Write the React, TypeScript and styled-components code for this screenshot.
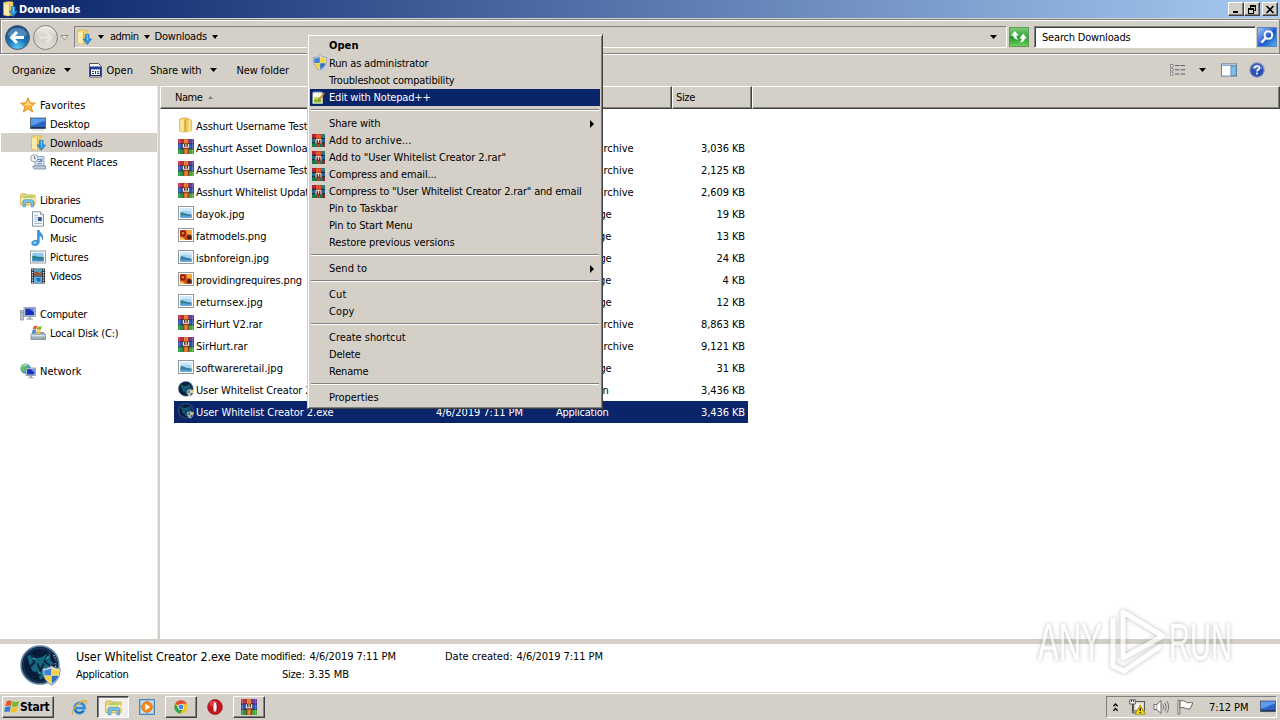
import React, { useLayoutEffect, useRef } from "react";
import styled, { createGlobalStyle, css } from "styled-components";

const FACE = "#d4d0c8";
const NAVY = "#0a246a";

const GlobalStyle = createGlobalStyle`
  * { box-sizing: border-box; }
  html, body { margin: 0; padding: 0; overflow: hidden; }
  body {
    font-family: "DejaVu Sans Condensed", "DejaVu Sans", sans-serif;
    font-size: 11px;
    line-height: 13px;
    color: #000;
    cursor: default;
  }
  svg { display: block; flex: none; }
`;

const raised = css`
  border: 1px solid;
  border-color: #fff #404040 #404040 #fff;
  box-shadow: inset -1px -1px 0 #808080;
`;

const sunken = css`
  border: 1px solid;
  border-color: #808080 #fff #fff #808080;
`;

// Label: text tracked so that it fills exactly the width it was designed for

const LabelText = styled.span<{ $bold?: boolean; $size?: number }>`
  display: inline-block;
  flex: none;
  justify-self: start;
  white-space: pre;
  ${({ $bold }) => $bold && css`font-weight: 700;`}
  ${({ $size }) => $size && css`font-size: ${$size}px;`}
`;

type LabelProps = { text: string; w?: number; bold?: boolean; size?: number };

const Label: React.FC<LabelProps> = ({ text, w, bold, size }) => {
  const ref = useRef<HTMLSpanElement>(null);
  useLayoutEffect(() => {
    const el = ref.current;
    if (!el || !w) return;
    el.style.letterSpacing = "0px";
    const natural = el.getBoundingClientRect().width;
    el.style.letterSpacing = `${(w + 0.5 - natural) / text.length}px`;
  }, [text, w]);
  return <LabelText ref={ref} $bold={bold} $size={size}>{text}</LabelText>;
};

/* ---------- icons ---------- */

type IconProps = { size?: number };

const FolderIcon: React.FC<IconProps> = ({ size = 16 }) => (
  <svg width={size} height={size} viewBox="0 0 16 16">
    <path d="M1.5 2 L6 .8 L11 1.4 V14 L6 15.2 L1.5 14 Z" fill="#f0d074" stroke="#d2a23e" strokeWidth=".6" />
    <path d="M2 3.2 L6.2 2.2 V14.6 L2 13.8 Z" fill="#fae392" />
    <path d="M6.2 2.2 L8 3 V14 L6.2 14.6 Z" fill="#d8aa40" />
    <path d="M8 2 L13.6 3 V13.6 L8 15 Z" fill="#f2d270" stroke="#d2a23e" strokeWidth=".5" />
    <path d="M11.6 3.4 V13.6" stroke="#fdf0b8" strokeWidth="1" />
  </svg>
);

const DownloadsIcon: React.FC<IconProps> = ({ size = 16 }) => (
  <svg width={size} height={size} viewBox="0 0 16 16">
    <path d="M1.5 1.5 L6.5 .5 L11 1 V14 L6 15 L1.5 14 Z" fill="#f0d074" stroke="#d9ae4d" strokeWidth=".6" />
    <path d="M2 3.2 L7 2.2 V14.8 L2 14 Z" fill="#fbe9a8" />
    <path d="M7 2.2 L8.4 3 V14 L7 14.8 Z" fill="#dfb650" />
    <path d="M9.6 5.5 H13 V10 H15.5 L11.3 15.4 L7.2 10 H9.6 Z" fill="#2f9be4" stroke="#1668ad" strokeWidth=".7" />
    <path d="M10.3 6.2 H11.6 V11" stroke="#8fd4fa" strokeWidth=".8" fill="none" />
  </svg>
);

const StarIcon = () => (
  <svg width="16" height="16" viewBox="0 0 16 16">
    <path d="M8 .8 L10 5.8 L15.4 6.2 L11.3 9.6 L12.6 15 L8 12 L3.4 15 L4.7 9.6 L.6 6.2 L6 5.8 Z" fill="#fbb63c" stroke="#e08a1c" strokeWidth=".9" strokeLinejoin="round" />
    <path d="M8 3.2 L9.2 6.7 L13 7 L8 8.6 L3.2 7 L6.7 6.7 Z" fill="#fee28c" />
  </svg>
);

const DesktopIcon: React.FC<IconProps> = ({ size = 16 }) => (
  <svg width={size} height={size} viewBox="0 0 16 16">
    <rect x=".5" y="2" width="15" height="10.5" fill="#2a63c4" stroke="#4a5668" strokeWidth=".8" />
    <path d="M1 2.5 H15 L15 5 C10 5 8 9 1 9.5 Z" fill="#5d9bea" />
    <path d="M1 11 H15 V12.3 H1 Z" fill="#21344f" />
    <path d="M2 14 H14" stroke="#b9c3ce" strokeWidth=".8" />
  </svg>
);

const RecentIcon = () => (
  <svg width="16" height="16" viewBox="0 0 16 16">
    <path d="M5 2.5 H14 V12 H5 Z" fill="#dfe8f2" stroke="#7d91a8" strokeWidth=".8" />
    <path d="M3 12 H15.5 V15 H5 C3.5 15 3 14 3 12 Z" fill="#c3d0df" stroke="#71859c" strokeWidth=".8" />
    <path d="M8 5.5 H12 M8 7.5 H12 M7 9.8 H12" stroke="#5a82b4" />
    <rect x="10" y="4.6" width="2.6" height="2.6" fill="#6f9bd0" />
    <circle cx="4.3" cy="4.3" r="3.6" fill="#f4f7fa" stroke="#8794a3" strokeWidth=".9" />
    <path d="M4.3 2 V4.6 H6" stroke="#3d5878" strokeWidth=".8" fill="none" />
  </svg>
);

const LibraryIcon: React.FC<IconProps> = ({ size = 16 }) => (
  <svg width={size} height={size} viewBox="0 0 16 16">
    <path d="M.7 3 L1.8 1.8 H6 L7 3 H15 V13 H.7 Z" fill="#f3d878" stroke="#cfa748" strokeWidth=".8" />
    <path d="M3 3.8 H13 V6 H3 Z" fill="#a9d36f" />
    <path d="M1.2 6 H14.8 V9 H1.2 Z" fill="#fceeb0" />
    <path d="M3 14.8 V9.6 Q3 7.8 5 7.8 H11.6 Q13.6 7.8 13.6 9.6 V14.8 H11.2 V11.4 Q11.2 10.6 10.4 10.6 H6.3 Q5.5 10.6 5.5 11.4 V14.8 Z" fill="#7cc3ea" stroke="#3c8fc4" strokeWidth=".7" />
  </svg>
);

const DocumentIcon = () => (
  <svg width="16" height="16" viewBox="0 0 16 16">
    <path d="M2.5 .8 H10.5 L13.5 3.8 V15.2 H2.5 Z" fill="#fff" stroke="#73879d" strokeWidth=".9" />
    <path d="M10.5 .8 V3.8 H13.5" fill="#d5e0ec" stroke="#73879d" strokeWidth=".7" />
    <path d="M4.2 4.2 H8 M4.2 6.2 H7 M4.2 8.2 H7 M4.2 10.2 H7 M4.2 12.5 H11.8" stroke="#8aa4c4" strokeWidth=".8" />
    <rect x="7.8" y="6" width="4" height="4.2" fill="#2f5c92" />
  </svg>
);

const MusicIcon = () => (
  <svg width="16" height="16" viewBox="0 0 16 16">
    <path d="M7.6 .3 H9.2 C9.4 3 13.8 3.8 12.6 9.5 C12.3 7 11 6 9.2 5.8 V12 C9.2 14 7.4 15.6 5 15.6 C3 15.6 1.7 14.6 1.7 13.1 C1.7 11 4.6 9.7 7.6 10.6 Z" fill="#3c9ce0" stroke="#1f6bb2" strokeWidth=".6" />
    <ellipse cx="4.7" cy="12.6" rx="1.8" ry="1.1" fill="#9bd4f7" />
  </svg>
);

const PictureIcon = () => (
  <svg width="16" height="16" viewBox="0 0 16 16">
    <rect x=".5" y="2" width="15" height="12" fill="#fdfdfd" stroke="#8a9198" strokeWidth=".9" />
    <rect x="2.3" y="3.8" width="11.4" height="8.4" fill="#8cc8f0" />
    <path d="M2.3 7 C5 6 7 8.6 13.7 8 V12.2 H2.3 Z" fill="#2b7d86" />
    <path d="M2.3 10.2 C6 9.4 9 11.2 13.7 9.8 V12.2 H2.3 Z" fill="#3e8ccb" />
  </svg>
);

const VideoIcon = () => (
  <svg width="16" height="16" viewBox="0 0 16 16">
    <rect x="1" y=".5" width="14" height="15" fill="#2f3338" />
    <rect x="4" y="1" width="8" height="6.6" fill="#4f9fd0" />
    <path d="M4 5 L7 3 L9 5.6 L12 3.6 V7.6 H4 Z" fill="#a4552e" />
    <rect x="4" y="8.5" width="8" height="6.5" fill="#5db4e6" />
    <path d="M6 10 H10.5 V13.4 H7.4 Z" fill="#2d6ea6" />
    <path d="M2.5 1.4 V15 M13.5 1.4 V15" stroke="#e9edf1" strokeWidth="1.3" strokeDasharray="1.3 1.2" />
  </svg>
);

const ComputerIcon = () => (
  <svg width="16" height="16" viewBox="0 0 16 16">
    <rect x=".4" y="4.5" width="3.2" height="9.5" fill="#b8c2cc" stroke="#77828e" strokeWidth=".6" />
    <path d="M1.2 6.5 H2.8" stroke="#5cb85c" />
    <rect x="4" y="1.3" width="11.4" height="9.2" fill="#d4dae1" stroke="#7f8a96" strokeWidth=".7" />
    <rect x="5.2" y="2.5" width="9" height="6.8" fill="#1631b8" />
    <path d="M9 2.5 H14.2 V6.5 Z" fill="#6f8df0" />
    <path d="M8.3 10.5 H11.2 V12.5 H13 V13.8 H6.4 V12.5 H8.3 Z" fill="#a5afba" />
  </svg>
);

const DiskIcon = () => (
  <svg width="16" height="16" viewBox="0 0 16 16">
    <path d="M1 9.5 L3 7.5 H13.5 L15.5 9.5 V14.5 H1 Z" fill="#9fb0bf" stroke="#657786" strokeWidth=".7" />
    <path d="M1.2 10 H15.3 V11.4 H1.2 Z" fill="#dbe4eb" />
    <rect x="11.6" y="12.2" width="2.6" height="1.2" fill="#52c45b" />
    <path d="M3.6 1.4 Q5.3 .2 7.2 1 L6.4 4.4 Q4.6 3.8 2.8 4.8 Z" fill="#e8572a" />
    <path d="M7.8 1.2 Q9.8 2 11.8 1 L11 4.4 Q9 5.3 7 4.5 Z" fill="#7cba32" />
    <path d="M2.6 5.3 Q4.4 4.3 6.2 5 L5.5 8.2 Q3.6 7.5 1.9 8.6 Z" fill="#3987dc" />
    <path d="M6.9 5.2 Q8.9 6 10.8 5 L10 8.4 Q8 9.2 6.1 8.4 Z" fill="#f8c02e" />
  </svg>
);

const NetworkIcon = () => (
  <svg width="16" height="16" viewBox="0 0 16 16">
    <circle cx="5.6" cy="5.6" r="5.2" fill="#3f9fd6" />
    <path d="M2 2.4 C4 .6 7 .8 8 2 L6 4 L6.5 6 L4 7.5 L3 10 C.6 8 .2 5 2 2.4 Z" fill="#67c04d" />
    <path d="M2.6 3.6 C4 2 6 1.6 7.4 2" stroke="#d8f2ff" fill="none" />
    <rect x="6" y="5" width="9.5" height="7.6" fill="#d2d9e0" stroke="#77838f" strokeWidth=".7" />
    <rect x="7.1" y="6.1" width="7.3" height="5.4" fill="#1733bd" />
    <path d="M10.6 6.1 H14.4 V9.4 Z" fill="#7b98f2" />
    <path d="M9.6 12.6 H12 V14.2 H13.6 V15.3 H8 V14.2 H9.6 Z" fill="#9ba6b2" />
  </svg>
);

const RarIcon: React.FC<{ h?: number }> = ({ h = 16 }) => (
  <svg width="16" height={h} viewBox="0 0 16 16" preserveAspectRatio="none">
    <rect x="0" y="0" width="16" height="5" fill="#a3349a" />
    <rect x="0" y="5" width="16" height="5.5" fill="#2d55b8" />
    <rect x="0" y="10.5" width="16" height="5.5" fill="#2f9a3e" />
    <path d="M0 0 H5 V4.6 H0 Z" fill="#c22e44" />
    <path d="M11 0 H16 V4.6 H11 Z" fill="#6a3aa4" />
    <path d="M0 11 H5.2 V16 H0 Z" fill="#2b9448" />
    <path d="M10.8 11 H16 V16 H10.8 Z" fill="#4aa838" />
    <path d="M0 5 H16 M0 10.5 H16" stroke="#1a1f3c" strokeWidth=".8" />
    <path d="M1.4 0 V16 M14.6 0 V16" stroke="#ffffff" strokeOpacity=".28" strokeWidth=".8" />
    <rect x="5.4" y="0" width="5.2" height="16" fill="#d8602a" />
    <path d="M5.4 0 V16 M10.6 0 V16" stroke="#5a2413" strokeWidth=".6" />
    <path d="M6.4 1 V4 M8 0 V4 M9.6 1 V4" stroke="#f4ac54" strokeWidth=".7" />
    <rect x="4.5" y="5" width="7" height="5.2" fill="#57382a" />
    <path d="M5.4 5.2 V8.8 H10.6 V5.2 M8 5.2 V8" stroke="#f3ece2" strokeWidth="1.1" fill="none" />
    <path d="M8 11.2 V15.4" stroke="#f0b75c" strokeWidth="1" />
  </svg>
);

// darker variant with teal sides, used by the shell extension entries
const RarMenuIcon = () => (
  <svg width="13" height="13" viewBox="0 0 13 13">
    <rect width="13" height="13" fill="#1d4a5e" />
    <path d="M0 0 H4 V4 H0 Z" fill="#b3243c" />
    <path d="M9 0 H13 V4 H9 Z" fill="#2c7d7a" />
    <path d="M0 4.5 H4 V8.5 H0 Z" fill="#236c86" />
    <path d="M9 4.5 H13 V8.5 H9 Z" fill="#2a5f8a" />
    <path d="M0 9 H13 V13 H0 Z" fill="#15794e" />
    <path d="M10.5 9 H13 V13 H10.5 Z" fill="#8f2733" />
    <path d="M0 4.3 H13 M0 8.8 H13" stroke="#10202c" strokeWidth=".8" />
    <path d="M4 0 H9 V6 H4 Z" fill="#d8431f" />
    <path d="M3.5 5 H9.5 V10 H3.5 Z" fill="#7a2a22" />
    <path d="M4 9.6 V5.6 M6.5 8.6 V5.4 M9 9.6 V5.6 M4 5.6 H9" stroke="#f4e6dc" strokeWidth="1" fill="none" />
    <path d="M5 10 H8 V13 H5 Z" fill="#c23a22" />
    <path d="M5.2 1 V3.6 M7.8 1 V3.6" stroke="#f29a5c" strokeWidth=".8" />
  </svg>
);

const JpgIcon = () => (
  <svg width="16" height="16" viewBox="0 0 16 16">
    <rect x=".5" y="1.5" width="15" height="13" fill="#fff" stroke="#8f979f" />
    <rect x="2.4" y="3.4" width="11.2" height="9.2" fill="#a7d3f1" />
    <path d="M2.4 3.4 H13.6 V6 C9 6 7 4.6 2.4 6.6 Z" fill="#d4ebfa" />
    <path d="M2.4 7.4 C5 6.6 7.4 9.4 13.6 9.4 V12.6 H2.4 Z" fill="#3b7f9c" />
    <path d="M2.4 10.6 C6 9.8 9 11.6 13.6 10.6 V12.6 H2.4 Z" fill="#5ba0d4" />
  </svg>
);

const PngIcon = () => (
  <svg width="16" height="16" viewBox="0 0 16 16">
    <rect x=".5" y="1.5" width="15" height="13" fill="#fff" stroke="#9a9a9a" />
    <rect x="2" y="3" width="12" height="10" fill="#c84e1c" />
    <circle cx="5" cy="6.4" r="2.8" fill="#8e1d10" />
    <circle cx="5" cy="6.2" r="1.2" fill="#f08a2c" />
    <path d="M8.5 3 H14 V9 C12 6.8 10 6.6 8.5 8 Z" fill="#f5a83c" />
    <circle cx="11.2" cy="10.3" r="2.2" fill="#51220f" />
    <path d="M2 10.8 C4 9.4 6 11.6 7.4 13 H2 Z" fill="#f4c65a" />
  </svg>
);

const ShieldShape = () => (
  <>
    <path d="M8 .6 Q11 2.6 14.8 2.5 Q15.4 11.5 8 15.6 Q.6 11.5 1.2 2.5 Q5 2.6 8 .6 Z" fill="#e9eef4" stroke="#8596ad" strokeWidth=".8" />
    <path d="M7.8 2 V8 H2.4 Q2 5.6 2.2 3.6 Q5.4 3.4 7.8 2 Z" fill="#3d82d6" />
    <path d="M8.2 2 V8 H13.6 Q14 5.6 13.8 3.6 Q10.6 3.4 8.2 2 Z" fill="#f7d246" />
    <path d="M7.8 8.2 V14.4 Q3.4 11.8 2.5 8.2 Z" fill="#f7cf3d" />
    <path d="M8.2 8.2 V14.4 Q12.6 11.8 13.5 8.2 Z" fill="#2f6fc4" />
  </>
);

const ShieldIcon = () => (
  <svg width="16" height="16" viewBox="0 0 16 16"><ShieldShape /></svg>
);

const NotepadIcon = () => (
  <svg width="13" height="13" viewBox="0 0 16 16">
    <path d="M1 2 H13 V15.5 H1 Z" fill="#fbfbf2" stroke="#b9bfa6" strokeWidth=".9" />
    <path d="M2 1.4 H12.5" stroke="#d8dde0" strokeWidth="1.6" strokeDasharray="1.2 .9" />
    <path d="M2.6 7.5 H11.4 V14 H2.6 Z" fill="#c3dc4e" />
    <path d="M2.6 10.6 C6 9 8 12 11.4 10 V14 H2.6 Z" fill="#86b92c" />
    <path d="M14.6 2.2 L8.4 9.6 L7.6 11.8 L9.8 10.6 L15.8 3.2 Z" fill="#f5a32a" stroke="#7a5218" strokeWidth=".6" />
  </svg>
);

const WolfIcon: React.FC<{ size: number; dim?: boolean }> = ({ size, dim }) => (
  <svg width={size} height={size} viewBox="0 0 40 40" opacity={dim ? 0.85 : 1}>
    <circle cx="19.5" cy="19.5" r="18.4" fill="#091c38" stroke="#5a7f9e" strokeWidth="1.6" />
    <circle cx="19.5" cy="19.5" r="16.3" fill="none" stroke="#15375a" strokeWidth="1.4" />
    <path d="M7 11 L11 9 L15 13 L21 12 L29 7 L30 15 L33 18 L28 22 L26 29 L20 34 L17 28 L12 25 L9 18 Z" fill="#17667f" />
    <path d="M11 9 L14 17 L10 21 M28 8 L24 16 L29 20 M17 18 L20 25 L23 18 M15 26 L20 30" stroke="#07223c" strokeWidth="1.8" fill="none" />
    <path d="M12 13 L15 14 M25 14 L28 11 M18 27 L20 28" stroke="#36a3ae" strokeWidth="1.3" />
    <path d="M33 10 L35 15 M34 18 L35 22" stroke="#dfeaf2" strokeWidth="1.1" strokeDasharray="1 1.5" />
    <g transform="translate(21 20) scale(1.22)"><ShieldShape /></g>
  </svg>
);

const WinFlag = () => (
  <svg width="16" height="16" viewBox="0 0 16 16">
    <path d="M2.6 2.4 Q5 .8 7.8 2 L6.8 7 Q4 6 1.4 7.4 Z" fill="#e5532a" />
    <path d="M8.6 2.3 Q11.6 3.6 15 2 L13.8 7 Q10.8 8.4 7.6 7.2 Z" fill="#76b82e" />
    <path d="M1.2 8.2 Q4 6.8 6.6 7.8 L5.6 12.8 Q3 11.8 .2 13.2 Z" fill="#2f7bdc" />
    <path d="M7.4 8 Q10.4 9.4 13.6 7.8 L12.4 12.8 Q9.4 14.2 6.4 13 Z" fill="#f8be28" />
  </svg>
);

const IeIcon = () => (
  <svg width="17" height="17" viewBox="0 0 17 17">
    <path d="M13 11.4 A5 5 0 1 1 13.6 9.2 H5" fill="none" stroke="#2f8fdc" strokeWidth="2.8" />
    <path d="M12.4 11.6 A4.8 4.8 0 0 1 4 11" fill="none" stroke="#1767b2" strokeWidth="1.2" />
    <path d="M1.6 15.6 C-1 11.6 6 4 11.6 1.6 C15.2 .2 17 1.8 14.8 5.4 C16 1.6 12 2 8 5 C4 8 1.4 12 1.6 15.6 Z" fill="#f0bd34" stroke="#c9912a" strokeWidth=".3" />
  </svg>
);

const WmpIcon = () => (
  <svg width="16" height="16" viewBox="0 0 16 16">
    <rect x=".5" y=".5" width="15" height="15" fill="#8cc2ea" stroke="#4f86b4" />
    <rect x="2" y="2" width="12" height="12" fill="#c9e3f6" />
    <circle cx="8" cy="8" r="5.4" fill="#f28a1c" stroke="#d2690d" strokeWidth=".7" />
    <path d="M6.3 4.8 L11.4 8 L6.3 11.2 Z" fill="#fff" />
  </svg>
);

const ChromeIcon = () => (
  <svg width="16" height="16" viewBox="0 0 16 16">
    <circle cx="8" cy="8" r="6.6" fill="#f5c428" />
    <path d="M8 8 L2.3 4.6 A6.6 6.6 0 0 1 13.8 4.8 H8 Z" fill="#df4a36" />
    <path d="M2.2 4.7 A6.6 6.6 0 0 0 7.4 14.6 L10.4 9.5 L5.4 9.6 Z" fill="#35a352" />
    <circle cx="8" cy="8" r="3.1" fill="#f4f4f4" />
    <circle cx="8" cy="8" r="2.4" fill="#4487e8" />
  </svg>
);

const OperaIcon = () => (
  <svg width="16" height="16" viewBox="0 0 16 16">
    <ellipse cx="8" cy="8" rx="7.4" ry="7.5" fill="#c81420" stroke="#8c0d14" strokeWidth=".6" />
    <ellipse cx="6" cy="4.6" rx="3.6" ry="2.8" fill="#e7626a" opacity=".6" />
    <ellipse cx="8" cy="8" rx="2" ry="5.2" fill="#f6f2f0" stroke="#7c0a10" strokeWidth=".5" />
  </svg>
);

const NetTrayIcon = () => (
  <svg width="17" height="16" viewBox="0 0 17 16">
    <rect x="4.5" y="2.5" width="11" height="9.5" fill="#d6d3cb" stroke="#5a5a5a" />
    <rect x="6.3" y="4.3" width="7.4" height="6" fill="#f4f4f2" />
    <path d="M.7 .8 H6.3 V5 H.7 Z" fill="#fff" stroke="#5a5a5a" />
    <path d="M2.5 1 V3 M4.5 1 V3 M3.5 5 V14 H7" stroke="#4a4a4a" fill="none" />
    <path d="M11.2 5.8 L16.4 15.2 H6 Z" fill="#f8d70e" stroke="#9c870c" strokeWidth=".8" />
    <path d="M11.2 8.8 V12 M11.2 13 V14.2" stroke="#000" strokeWidth="1.2" />
  </svg>
);

const SpeakerIcon = () => (
  <svg width="17" height="16" viewBox="0 0 17 16">
    <path d="M1 5.5 H3.8 L8 1.6 V14.4 L3.8 10.5 H1 Z" fill="#fff" stroke="#5a5a5a" strokeWidth=".9" />
    <path d="M3.8 5.5 V10.5" stroke="#8a8a8a" strokeWidth=".8" />
    <path d="M10 5.5 Q11.4 8 10 10.5 M12 3.8 Q14.4 8 12 12.2 M14 2.2 Q17.4 8 14 13.8" stroke="#6e6e6e" strokeWidth=".9" fill="none" />
  </svg>
);

const FlagIcon = () => (
  <svg width="17" height="16" viewBox="0 0 17 16">
    <path d="M1 1 H2.8 V15.2 H1 Z" fill="#fff" stroke="#5a5a5a" strokeWidth=".8" />
    <path d="M3 2 Q6 1 8.6 2.6 Q9.6 4 11 3.8 Q13.6 3.4 15.8 3.8 L13.4 9.6 Q11 10.6 8.8 9.4 Q6 7.8 3 9 Z" fill="#fff" stroke="#5a5a5a" strokeWidth=".9" />
  </svg>
);

const Caret: React.FC<{ w?: number }> = ({ w = 7 }) => (
  <svg width={w} height="4" viewBox="0 0 8 4" preserveAspectRatio="none"><path d="M0 0 H8 L4 4 Z" /></svg>
);

/* ---------- window frame ---------- */

const Screen = styled.div`
  position: relative;
  width: 1280px;
  height: 720px;
  overflow: hidden;
  display: flex;
  flex-direction: column;
  background: ${FACE};
`;

const TitleBar = styled.div`
  height: 18px;
  flex: none;
  display: flex;
  align-items: center;
  padding: 0 2px;
  gap: 1px;
  color: #fff;
  background: linear-gradient(to right, #0a246a, #a6caf0);
`;

const Spacer = styled.div<{ $w?: number }>`
  ${({ $w }) => ($w === undefined ? css`flex: 1;` : css`flex: none; width: ${$w}px;`)}
`;

const CaptionButton = styled.div<{ $gap?: number }>`
  ${raised}
  width: 16px;
  height: 14px;
  margin-left: ${({ $gap }) => $gap ?? -1}px;
  background: ${FACE};
  display: flex;
  align-items: center;
  justify-content: center;
`;

const NavBar = styled.div`
  height: 35px;
  flex: none;
  margin-top: 1px;
  display: flex;
  align-items: center;
  padding: 0 1px 0 4px;
  border: 1px solid #808080;
  box-shadow: inset 1px 1px 0 #fff, 0 1px 0 #fff;
`;

const AddressBox = styled.div`
  ${sunken}
  width: 933px;
  height: 22px;
  margin-left: 5px;
  display: flex;
  align-items: center;
  padding: 0 9px 0 1px;
`;

const GoButton = styled.div<{ $c: "green" | "blue" }>`
  width: 20px;
  height: 20px;
  flex: none;
  display: flex;
  align-items: center;
  justify-content: center;
  border: 1px solid ${({ $c }) => ($c === "green" ? "#5f9c5a" : "#5a86c4")};
  background: ${({ $c }) =>
    $c === "green"
      ? "linear-gradient(#7ccb74, #2fa336 50%, #1e9428 52%, #6ed05c)"
      : "linear-gradient(135deg, #a9c8f4, #3a6ddc 45%, #1b53c8 55%, #53b6ee)"};
`;

const SearchBox = styled.div`
  width: 222px;
  height: 22px;
  margin-left: 5px;
  padding: 2px 0 0 7px;
  display: flex;
  align-items: center;
  background: #fff;
  border: 1px solid;
  border-color: #808080 #fff #fff #808080;
  box-shadow: inset 1px 1px 0 #404040;
`;

const Toolbar = styled.div`
  height: 32px;
  flex: none;
  display: flex;
  align-items: center;
  padding: 0 15px 0 12px;
`;

const Body = styled.div`
  display: flex;
  height: 553px;
  flex: none;
`;

/* ---------- navigation tree ---------- */

const Sidebar = styled.div`
  width: 157px;
  padding-top: 9px;
  background: #fff;
`;

const TreeRow = styled.div<{ $level: 0 | 1; $selected?: boolean }>`
  height: 19px;
  display: flex;
  align-items: center;
  gap: 4px;
  margin-left: 1px;
  padding-top: 1px;
  padding-left: ${({ $level }) => ($level ? 29 : 19)}px;
  ${({ $selected }) => $selected && css`background: ${FACE};`}
`;

const Splitter = styled.div`
  width: 3px;
  background: ${FACE};
  border-left: 1px solid #ecebe6;
`;

/* ---------- file list ---------- */

const ListPane = styled.div`
  flex: 1;
  background: #fff;
`;

const HeaderRow = styled.div`
  display: flex;
  height: 23px;
`;

const HeaderCell = styled.div<{ $w?: number; $pad?: number }>`
  ${({ $w }) => ($w ? css`width: ${$w}px;` : css`flex: 1;`)}
  ${raised}
  display: flex;
  align-items: center;
  padding: 0 0 0 ${({ $pad }) => $pad ?? 4}px;
  background: ${FACE};
`;

const Files = styled.div`
  padding: 6px 0 0 14px;
`;

const FileRow = styled.div<{ $selected?: boolean }>`
  width: 574px;
  height: 22px;
  display: grid;
  grid-template-columns: 18px 240px 120px 1fr auto;
  align-items: center;
  padding: 0 3px 0 4px;
  ${({ $selected }) => $selected && css`background: ${NAVY}; color: #fff;`}
`;

const FileGlyph = styled.div`
  height: 18px;
  padding-bottom: 2px;
  display: flex;
  align-items: flex-start;
`;

/* ---------- details pane and taskbar ---------- */

const Details = styled.div`
  height: 48px;
  margin-top: 5px;
  flex: none;
  display: flex;
  background: #fff;
  padding: 1px 0 0 20px;
`;

const DetailGrid = styled.div`
  display: grid;
  grid-template-columns: 159px 210px auto;
  grid-auto-rows: 18px;
  padding: 2px 0 0 15px;
  align-items: center;
`;

const DetailLabel = styled.div<{ $indent?: number }>`
  display: flex;
  gap: 4px;
  padding-left: ${({ $indent }) => $indent ?? 0}px;
`;

const Taskbar = styled.div`
  height: 28px;
  flex: none;
  display: flex;
  align-items: center;
  padding: 1px 3px 0 2px;
  border-top: 1px solid ${FACE};
  box-shadow: inset 0 1px 0 #fff;
`;

const StartButton = styled.div`
  ${raised}
  width: 52px;
  height: 22px;
  display: flex;
  align-items: center;
  padding-left: 1px;
`;

const TaskButton = styled.div<{ $mode: "flat" | "open" | "active" }>`
  width: 32px;
  height: 22px;
  margin-right: 2px;
  display: flex;
  align-items: center;
  justify-content: center;
  ${({ $mode }) => $mode === "open" && raised}
  ${({ $mode }) =>
    $mode === "active" &&
    css`
      border: 1px solid;
      border-color: #404040 #fff #fff #404040;
      box-shadow: inset 1px 1px 0 #808080;
      background: #f1efeb;
    `}
`;

const Tray = styled.div`
  ${sunken}
  width: 171px;
  height: 22px;
  display: flex;
  align-items: center;
  padding: 0 0 0 6px;
`;

/* ---------- context menu ---------- */

const Menu = styled.div`
  position: absolute;
  left: 307px;
  top: 34px;
  width: 296px;
  padding: 2px;
  background: ${FACE};
  border: 1px solid;
  border-color: ${FACE} #404040 #404040 ${FACE};
  box-shadow: inset 1px 1px 0 #fff, inset -1px -1px 0 #808080;
`;

const MenuItem = styled.div<{ $active?: boolean; $tall?: boolean }>`
  height: ${({ $tall }) => ($tall ? 18 : 17)}px;
  display: grid;
  grid-template-columns: 17px 1fr 10px;
  align-items: center;
  padding: 0 0 0 2px;
  ${({ $active }) => $active && css`background: ${NAVY}; color: #fff;`}
`;

const Separator = styled.div`
  height: 2px;
  margin: 3px 1px 4px;
  border-top: 1px solid #808080;
  border-bottom: 1px solid #fff;
`;

const Watermark = styled.svg`
  position: absolute;
  left: 1030px;
  top: 600px;
  filter: drop-shadow(0 0 2px rgba(80, 80, 80, 0.6));
  opacity: 0.65;
`;

/* ---------- data ---------- */

type TreeItem = { text: string; w: number; level: 0 | 1; icon: React.ReactNode; selected?: boolean } | null;

const tree: TreeItem[] = [
  { text: "Favorites", w: 45, level: 0, icon: <StarIcon /> },
  { text: "Desktop", w: 39, level: 1, icon: <DesktopIcon /> },
  { text: "Downloads", w: 52, level: 1, icon: <DownloadsIcon />, selected: true },
  { text: "Recent Places", w: 67, level: 1, icon: <RecentIcon /> },
  null,
  { text: "Libraries", w: 40, level: 0, icon: <LibraryIcon /> },
  { text: "Documents", w: 53, level: 1, icon: <DocumentIcon /> },
  { text: "Music", w: 26, level: 1, icon: <MusicIcon /> },
  { text: "Pictures", w: 38, level: 1, icon: <PictureIcon /> },
  { text: "Videos", w: 31, level: 1, icon: <VideoIcon /> },
  null,
  { text: "Computer", w: 46.5, level: 0, icon: <ComputerIcon /> },
  { text: "Local Disk (C:)", w: 68, level: 1, icon: <DiskIcon /> },
  null,
  { text: "Network", w: 41, level: 0, icon: <NetworkIcon /> },
];

type Kind = "folder" | "rar" | "jpg" | "png" | "exe";
type FileEntry = { name: string; w: number; kind: Kind; size: string };

const files: FileEntry[] = [
  { name: "Asshurt Username Test", w: 111, kind: "folder", size: "" },
  { name: "Asshurt Asset Downloa", w: 111, kind: "rar", size: "3,036 KB" },
  { name: "Asshurt Username Test", w: 111, kind: "rar", size: "2,125 KB" },
  { name: "Asshurt Whitelist Updat", w: 112.5, kind: "rar", size: "2,609 KB" },
  { name: "dayok.jpg", w: 48, kind: "jpg", size: "19 KB" },
  { name: "fatmodels.png", w: 70, kind: "png", size: "13 KB" },
  { name: "isbnforeign.jpg", w: 72.5, kind: "jpg", size: "24 KB" },
  { name: "providingrequires.png", w: 105.5, kind: "png", size: "4 KB" },
  { name: "returnsex.jpg", w: 66.5, kind: "jpg", size: "12 KB" },
  { name: "SirHurt V2.rar", w: 66, kind: "rar", size: "8,863 KB" },
  { name: "SirHurt.rar", w: 51, kind: "rar", size: "9,121 KB" },
  { name: "softwareretail.jpg", w: 86.5, kind: "jpg", size: "31 KB" },
  { name: "User Whitelist Creator 2", w: 115, kind: "exe", size: "3,436 KB" },
  { name: "User Whitelist Creator 2.exe", w: 137, kind: "exe", size: "3,436 KB" },
];

const kinds: Record<Kind, { type: string; w: number }> = {
  folder: { type: "File", w: 16 },
  rar: { type: "WinRAR archive", w: 77 },
  jpg: { type: "JPEG image", w: 55 },
  png: { type: "PNG image", w: 55 },
  exe: { type: "Application", w: 52 },
};

const sizeWidth = (s: string) => ({ 8: 43.5, 5: 28, 4: 22 } as Record<number, number>)[s.length];

const fileIcon = (kind: Kind, selected: boolean) => {
  if (kind === "folder") return <FolderIcon />;
  if (kind === "rar") return <RarIcon h={15} />;
  if (kind === "jpg") return <JpgIcon />;
  if (kind === "png") return <PngIcon />;
  return <WolfIcon size={16} dim={selected} />;
};

type Entry = { text: string; w: number; icon?: React.ReactNode; bold?: boolean; sub?: boolean; active?: boolean; tall?: boolean } | null;

const rar = <RarMenuIcon />;

const menu: Entry[] = [
  { text: "Open", w: 29, bold: true },
  { text: "Run as administrator", w: 99, icon: <ShieldIcon />, tall: true },
  { text: "Troubleshoot compatibility", w: 125 },
  { text: "Edit with Notepad++", w: 101, icon: <NotepadIcon />, active: true },
  null,
  { text: "Share with", w: 51, sub: true },
  { text: "Add to archive...", w: 82, icon: rar },
  { text: 'Add to "User Whitelist Creator 2.rar"', w: 176.5, icon: rar },
  { text: "Compress and email...", w: 107, icon: rar },
  { text: 'Compress to "User Whitelist Creator 2.rar" and email', w: 252, icon: rar },
  { text: "Pin to Taskbar", w: 68 },
  { text: "Pin to Start Menu", w: 83 },
  { text: "Restore previous versions", w: 125 },
  null,
  { text: "Send to", w: 37.5, sub: true },
  null,
  { text: "Cut", w: 17 },
  { text: "Copy", w: 25 },
  null,
  { text: "Create shortcut", w: 76 },
  { text: "Delete", w: 31 },
  { text: "Rename", w: 39 },
  null,
  { text: "Properties", w: 49 },
];

const ContextMenu = () => (
  <Menu>
    {menu.map((item, i) =>
      item === null ? (
        <Separator key={i} />
      ) : (
        <MenuItem key={i} $active={item.active} $tall={item.tall}>
          <span>{item.icon}</span>
          <Label text={item.text} w={item.w} bold={item.bold} />
          {item.sub && (
            <svg width="4" height="8" viewBox="0 0 4 8"><path d="M0 0 L4 4 L0 8 Z" /></svg>
          )}
        </MenuItem>
      )
    )}
  </Menu>
);

const NavButtons = () => (
  <svg width="64" height="30" viewBox="0 0 64 30">
    <defs>
      <radialGradient id="back" cx=".5" cy=".95" r=".9">
        <stop offset="0" stopColor="#5fd0f4" />
        <stop offset=".45" stopColor="#1c78bd" />
        <stop offset="1" stopColor="#174a86" />
      </radialGradient>
      <linearGradient id="fwd" x1="0" y1="0" x2="0" y2="1">
        <stop offset="0" stopColor="#f2f1ee" />
        <stop offset=".5" stopColor="#cfccc6" />
        <stop offset="1" stopColor="#e4e2dd" />
      </linearGradient>
    </defs>
    <circle cx="12.5" cy="15.5" r="12" fill="url(#back)" stroke="#4b5b70" />
    <path d="M2.5 13 A10.5 10.5 0 0 1 22.5 13 Q12.5 17 2.5 13 Z" fill="#b8d6ee" opacity=".35" />
    <path d="M12 10 L6.6 15.5 L12 21 M7.4 15.5 H19" fill="none" stroke="#fff" strokeWidth="3" />
    <circle cx="40.5" cy="15.5" r="12" fill="url(#fwd)" stroke="#85827b" />
    <path d="M41 10 L46.4 15.5 L41 21 M45.6 15.5 H34" fill="none" stroke="#e4e2de" strokeWidth="3" />
    <path d="M56 13.5 H63 L59.5 17.5 Z" fill="#f3f2ef" stroke="#777" strokeWidth=".8" />
  </svg>
);

const App: React.FC = () => (
  <Screen>
    <GlobalStyle />
    <TitleBar>
      <DownloadsIcon />
      <Label text="Downloads" w={61} bold />
      <Spacer />
      <CaptionButton>
        <svg width="10" height="9" viewBox="0 0 10 9"><path d="M2 7 H7" stroke="#000" strokeWidth="2" /></svg>
      </CaptionButton>
      <CaptionButton>
        <svg width="10" height="9" viewBox="0 0 10 9" shapeRendering="crispEdges">
          <path d="M3.5 1 V3 M3 1 H9 M8.5 1 V6 M7 5.5 H9" stroke="#000" fill="none" strokeWidth="1.4" />
          <path d="M1 4 H7 M1.5 4 V8.5 M6.5 4 V8.5 M1 8.5 H7" stroke="#000" fill="none" strokeWidth="1.2" />
        </svg>
      </CaptionButton>
      <CaptionButton $gap={1}>
        <svg width="10" height="9" viewBox="0 0 10 9"><path d="M1.5 1 L8.5 8 M8.5 1 L1.5 8" stroke="#000" strokeWidth="1.6" /></svg>
      </CaptionButton>
    </TitleBar>

    <NavBar>
      <NavButtons />
      <AddressBox>
        <DownloadsIcon />
        <Spacer $w={6} />
        <Caret w={6} />
        <Spacer $w={6} />
        <Label text="admin" w={28} />
        <Spacer $w={5} />
        <Caret w={6} />
        <Spacer $w={5} />
        <Label text="Downloads" w={52} />
        <Spacer $w={5} />
        <Caret w={6} />
        <Spacer />
        <Caret />
      </AddressBox>
      <Spacer $w={2} />
      <GoButton $c="green">
        <svg width="18" height="16" viewBox="0 0 18 16">
          <path d="M.8 7.6 L4.8 3 L8.8 7.6 H6.4 Q6.4 10 8.4 11.8 Q3.6 11.6 3.2 7.6 Z" fill="#fff" transform="translate(0 -1)" />
          <path d="M17.2 8.4 L13.2 3.8 L9.2 8.4 H11.6 Q11.6 10.8 9.6 12.6 Q14.4 12.4 14.8 8.4 Z" fill="#fff" transform="translate(0 1)" />
        </svg>
      </GoButton>
      <SearchBox>
        <Label text="Search Downloads" w={88} />
      </SearchBox>
      <Spacer $w={1} />
      <GoButton $c="blue">
        <svg width="16" height="16" viewBox="0 0 16 16">
          <circle cx="9.4" cy="6" r="3.8" fill="none" stroke="#fff" strokeWidth="2" />
          <path d="M6.8 9 L2.4 13.6" stroke="#fff" strokeWidth="2.4" />
        </svg>
      </GoButton>
    </NavBar>

    <Toolbar>
      <Label text="Organize" w={43} />
      <Spacer $w={8} />
      <Caret />
      <Spacer $w={17} />
      <svg width="15" height="16" viewBox="0 0 15 16">
        <path d="M1.5 1.5 H10.5 L13.5 4.5 V15 H1.5 Z" fill="#fff" stroke="#555" />
        <rect x="2.5" y="5" width="10" height="8.5" fill="#fff" stroke="#1c2c74" />
        <rect x="2.5" y="5" width="10" height="2.4" fill="#1c3fa0" />
        <path d="M4 9.5 H6 M4 11.5 H6 M7.5 9 V12 M9 9.8 H11.4 M9 11.6 H11.4" stroke="#2a3c8c" />
      </svg>
      <Spacer $w={4} />
      <Label text="Open" w={26} />
      <Spacer $w={17} />
      <Label text="Share with" w={51} />
      <Spacer $w={8} />
      <Caret />
      <Spacer $w={20} />
      <Label text="New folder" w={52} />
      <Spacer />
      <svg width="16" height="12" viewBox="0 0 16 12">
        <path d="M.5 .5 H3 V3 H.5 Z M.5 4.6 H3 V7.1 H.5 Z M.5 8.8 H3 V11.3 H.5 Z" fill="#fff" stroke="#707070" strokeWidth=".8" />
        <path d="M5 1.5 H9.4 M10.6 1.5 H15 M5 5.8 H9.4 M10.6 5.8 H15 M5 10 H9.4 M10.6 10 H15" stroke="#5a616b" />
      </svg>
      <Spacer $w={13} />
      <Caret />
      <Spacer $w={15} />
      <svg width="16" height="14" viewBox="0 0 17 14">
        <rect x=".5" y=".5" width="16" height="13" fill="#fff" stroke="#5f7f9f" />
        <path d="M1 2 H16" stroke="#8aa8c6" strokeWidth="1.4" />
        <rect x="10.5" y="3" width="5.5" height="10" fill="#7fbde2" stroke="#4a84ae" strokeWidth=".8" />
      </svg>
      <Spacer $w={12} />
      <svg width="16" height="16" viewBox="0 0 16 16">
        <circle cx="8" cy="8" r="7.3" fill="#2d4fb8" stroke="#9aa3bd" strokeWidth="1.2" />
        <path d="M2.4 6.4 A6 6 0 0 1 13.6 6.4 Q8 9 2.4 6.4 Z" fill="#7f9be4" opacity=".6" />
        <path d="M5.6 6.3 Q5.7 4 8 4 Q10.4 4 10.4 6 Q10.4 7.2 9.2 7.8 Q8 8.4 8 9.6" fill="none" stroke="#fff" strokeWidth="1.6" />
        <rect x="7.1" y="10.6" width="1.8" height="1.8" fill="#fff" />
      </svg>
    </Toolbar>

    <Body>
      <Sidebar>
        {tree.map((item, i) =>
          item === null ? (
            <TreeRow key={i} $level={0} />
          ) : (
            <TreeRow key={i} $level={item.level} $selected={item.selected}>
              {item.icon}
              <Label text={item.text} w={item.w} />
            </TreeRow>
          )
        )}
      </Sidebar>
      <Splitter />
      <ListPane>
        <HeaderRow>
          <HeaderCell $w={272} $pad={14}>
            <Label text="Name" w={27} />
            <Spacer $w={5} />
            <svg width="5" height="3" viewBox="0 0 5 3"><path d="M0 3 H5 L2.5 0 Z" fill="#808080" /></svg>
          </HeaderCell>
          <HeaderCell $w={120} />
          <HeaderCell $w={120} />
          <HeaderCell $w={80} $pad={3}><Label text="Size" w={18.5} /></HeaderCell>
          <HeaderCell />
        </HeaderRow>
        <Files>
          {files.map((f, i) => {
            const selected = i === files.length - 1;
            return (
              <FileRow key={i} $selected={selected}>
                <FileGlyph>{fileIcon(f.kind, selected)}</FileGlyph>
                <Label text={f.name} w={f.w} />
                {selected ? <Label text="4/6/2019 7:11 PM" w={86.5} /> : <span />}
                {f.size ? <Label text={kinds[f.kind].type} w={kinds[f.kind].w} /> : <span />}
                <Label text={f.size} w={sizeWidth(f.size)} />
              </FileRow>
            );
          })}
        </Files>
      </ListPane>
    </Body>

    <Details>
      <WolfIcon size={41} />
      <DetailGrid>
        <Label text="User Whitelist Creator 2.exe" w={154} size={12.5} />
        <DetailLabel>
          <Label text="Date modified:" w={70} />
          <Label text="4/6/2019 7:11 PM" w={86} />
        </DetailLabel>
        <DetailLabel>
          <Label text="Date created:" w={67} />
          <Label text="4/6/2019 7:11 PM" w={86} />
        </DetailLabel>
        <Label text="Application" w={52} />
        <DetailLabel $indent={47}>
          <Label text="Size:" w={22} />
          <Label text="3.35 MB" w={40} />
        </DetailLabel>
      </DetailGrid>
    </Details>

    <Taskbar>
      <StartButton>
        <WinFlag />
        <Label text="Start" w={29} bold size={12} />
      </StartButton>
      <Spacer $w={9} />
      <TaskButton $mode="flat"><IeIcon /></TaskButton>
      <TaskButton $mode="active"><LibraryIcon size={17} /></TaskButton>
      <TaskButton $mode="flat"><WmpIcon /></TaskButton>
      <TaskButton $mode="open"><ChromeIcon /></TaskButton>
      <TaskButton $mode="flat"><OperaIcon /></TaskButton>
      <TaskButton $mode="open"><RarIcon /></TaskButton>
      <Spacer />
      <Tray>
        <svg width="5" height="9" viewBox="0 0 5 9"><path d="M.3 3.3 L2.5 1 L4.7 3.3 M.3 7.8 L2.5 5.5 L4.7 7.8" stroke="#000" strokeWidth="1.3" fill="none" /></svg>
        <Spacer $w={11} />
        <NetTrayIcon />
        <Spacer $w={7} />
        <SpeakerIcon />
        <Spacer $w={7} />
        <FlagIcon />
        <Spacer $w={15} />
        <Label text="7:12 PM" w={39} />
        <Spacer />
        <DesktopIcon />
      </Tray>
    </Taskbar>

    <ContextMenu />

    <Watermark width="215" height="84" viewBox="0 0 215 84">
      <g fill="#fff" fontFamily='"Liberation Sans", sans-serif' fontSize="52">
        <text x="8" y="60" textLength="64" lengthAdjust="spacingAndGlyphs">ANY</text>
        <text x="139" y="60" textLength="63" lengthAdjust="spacingAndGlyphs">RUN</text>
      </g>
      <path d="M93 12 L133 36 L93 58 Z M83 18 V66 L94 71 L131 46" fill="none" stroke="#fff" strokeWidth="5" strokeLinejoin="round" />
    </Watermark>
  </Screen>
);

export default App;
